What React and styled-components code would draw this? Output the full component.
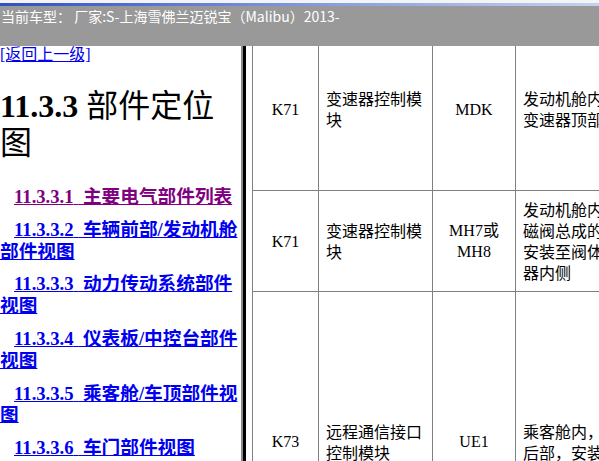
import React from 'react';
import styled, { createGlobalStyle } from 'styled-components';

const GlobalStyle = createGlobalStyle`
  html, body {
    margin: 0;
    padding: 0;
    background: #fff;
    overflow: hidden;
  }
`;

const Page = styled.div`
  width: 599px;
  height: 461px;
  display: flex;
  flex-direction: column;
  overflow: hidden;
`;

const Header = styled.div`
  height: 43px;
  flex: none;
  background: #999999;
  border-top: 3px solid #f4f4f4;
`;

const Stripe = styled.div`
  height: 3px;
  background: linear-gradient(to right, #2f4fc4, #7f98dc 50%, #c4d2f0);
`;

const Title = styled.div`
  padding: 1px 0 0 1px;
  color: #fff;
  font-family: "Noto Sans CJK SC", sans-serif;
  font-size: 14px;
  line-height: 18px;
  white-space: nowrap;
`;

const Main = styled.div`
  flex: 1;
  display: flex;
  min-height: 0;
`;

const Sidebar = styled.div`
  width: 241px;
  flex: none;
  overflow: hidden;
  font-family: "Liberation Serif", "Noto Sans CJK SC", serif;
`;

const Splitter = styled.div`
  width: 3px;
  flex: none;
  background: #000;
  border-left: 2px solid #8a8a8a;
`;

const Content = styled.div`
  flex: 1;
  overflow: hidden;
  padding-left: 6px;
`;

const BackLink = styled.a`
  display: inline-block;
  color: #0000ee;
  font-size: 16px;
  line-height: 18px;
  text-decoration: underline;
`;

const Heading = styled.h1`
  margin: 24px 0 24px;
  font-size: 32px;
  line-height: 37px;
  font-weight: bold;

  span {
    font-weight: normal;
  }
`;

const TocItem = styled.p`
  margin: 0 0 11px;
  text-indent: 14px;
  font-size: 18.67px;
  line-height: 21.8px;
  font-weight: bold;
`;

const TocLink = styled.a`
  color: ${p => (p.$visited ? '#800080' : '#0000ee')};
  text-decoration: underline;
`;

const Grid = styled.table`
  margin-top: -19px;
  border-collapse: collapse;
  table-layout: fixed;
  width: 480px;
  font-family: "Liberation Serif", "Noto Sans CJK SC", serif;
  font-size: 16px;
  line-height: 21px;
  color: #000;
`;

const Row = styled.tr`
  height: ${p => p.$height}px;
`;

const Cell = styled.td`
  border: 1px solid #808080;
  padding: 0 7px;
  vertical-align: middle;
  text-align: ${p => (p.$center ? 'center' : 'left')};
  font-family: ${p => (p.$cjk ? '"Noto Sans CJK SC", sans-serif' : 'inherit')};
  white-space: ${p => (p.$nowrap ? 'nowrap' : 'normal')};
`;

const toc = [
  { num: '11.3.3.1', title: '主要电气部件列表', visited: true },
  { num: '11.3.3.2', title: '车辆前部/发动机舱部件视图' },
  { num: '11.3.3.3', title: '动力传动系统部件视图' },
  { num: '11.3.3.4', title: '仪表板/中控台部件视图' },
  { num: '11.3.3.5', title: '乘客舱/车顶部件视图' },
  { num: '11.3.3.6', title: '车门部件视图' },
];

const parts = [
  {
    code: 'K71',
    name: '变速器控制模块',
    conn: ['MDK'],
    place: ['发动机舱内，', '变速器顶部'],
    height: 163,
  },
  {
    code: 'K71',
    name: '变速器控制模块',
    conn: ['MH7或', 'MH8'],
    place: ['发动机舱内，电', '磁阀总成的一', '安装至阀体', '器内侧'],
    height: 101,
  },
  {
    code: 'K73',
    name: '远程通信接口控制模块',
    conn: ['UE1'],
    place: ['乘客舱内，', '后部，安装在'],
    height: 300,
  },
];

const lines = arr =>
  arr.map((t, i) => (
    <React.Fragment key={i}>
      {i > 0 && <br />}
      {t}
    </React.Fragment>
  ));

export default function App() {
  return (
    <Page>
      <GlobalStyle />
      <Header>
        <Stripe />
        <Title>当前车型： 厂家:S-上海雪佛兰迈锐宝（Malibu）2013-</Title>
      </Header>
      <Main>
        <Sidebar>
          <BackLink href="#">[返回上一级]</BackLink>
          <Heading>
            11.3.3 <span>部件定位图</span>
          </Heading>
          {toc.map(item => (
            <TocItem key={item.num}>
              <TocLink href="#" $visited={item.visited}>
                {item.num}{'\u00a0'} {item.title}
              </TocLink>
            </TocItem>
          ))}
        </Sidebar>
        <Splitter />
        <Content>
          <Grid>
            <colgroup>
              <col style={{ width: 66 }} />
              <col style={{ width: 114 }} />
              <col style={{ width: 83 }} />
              <col style={{ width: 130 }} />
              <col />
            </colgroup>
            <tbody>
              {parts.map((p, i) => (
                <Row key={i} $height={p.height}>
                  <Cell $center>{p.code}</Cell>
                  <Cell $cjk>{p.name}</Cell>
                  <Cell $center $nowrap>{lines(p.conn)}</Cell>
                  <Cell $cjk $nowrap>{lines(p.place)}</Cell>
                  <Cell />
                </Row>
              ))}
            </tbody>
          </Grid>
        </Content>
      </Main>
    </Page>
  );
}
